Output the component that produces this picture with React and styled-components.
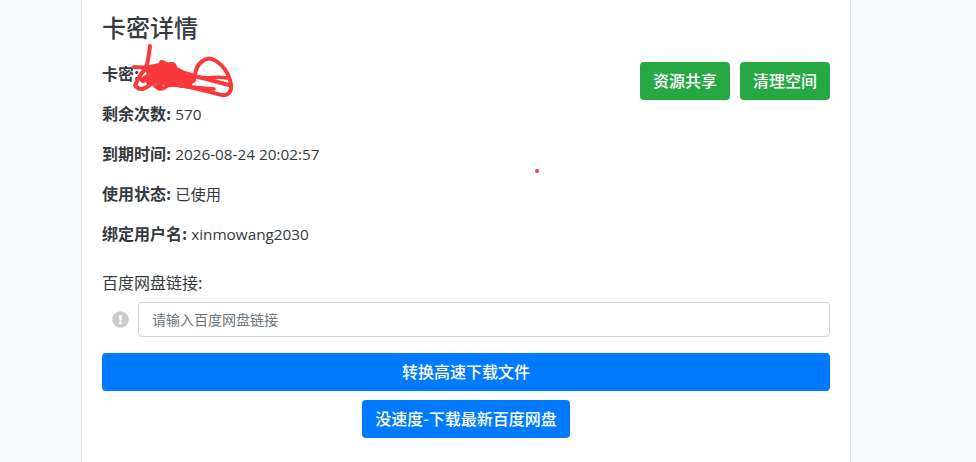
import React from "react";
import styled, { createGlobalStyle } from "styled-components";
import { FaExclamationCircle } from "react-icons/fa";

const Global = createGlobalStyle`
  html, body { margin: 0; padding: 0; height: 462px; overflow: hidden; background: #f8f9fa; }
  body { font-family: "Open Sans", "Noto Sans CJK SC", sans-serif; color: #343a40; font-size: 16px; }
`;
const Page = styled.div`
  position: relative;
  height: 462px;
  overflow: hidden;
  padding-left: 81px;
`;
const Card = styled.main`
  position: relative;
  box-sizing: border-box;
  width: 770px;
  height: 462px;
  background: #fff;
  border-left: 1px solid #dee2e6;
  border-right: 1px solid #dee2e6;
  padding: 8px 20px 0;
`;
const Title = styled.h2`
  margin: 0 0 16px;
  height: 38px;
  font-size: 24px;
  line-height: 38px;
  font-weight: 500;
  font-family: "Noto Sans CJK SC", sans-serif;
  color: #343a40;
`;
const Summary = styled.section`
  display: flex;
  justify-content: space-between;
  align-items: flex-start;
`;
const Details = styled.div`
  display: flex;
  flex-direction: column;
`;
const Row = styled.p`
  margin: 0 0 16px;
  height: 24px;
  line-height: 22px;
  font-size: 15.3px;
  white-space: nowrap;
  strong { font-weight: 700; font-size: 16px; font-family: "Noto Sans CJK SC", sans-serif; }
`;
const Actions = styled.div`
  display: flex;
  gap: 10px;
`;
const Button = styled.button`
  box-sizing: border-box;
  height: 38px;
  padding: 0 ${(p) => (p.$wide ? 0 : "13px")} 2px;
  width: ${(p) => (p.$wide ? "100%" : "auto")};
  border: 0;
  border-radius: 4px;
  background: ${(p) => (p.$tone === "green" ? "#28a745" : "#007bff")};
  color: #fff;
  font: 500 16px "Noto Sans CJK SC", sans-serif;
  white-space: nowrap;
`;
const Label = styled.label`
  display: block;
  margin-top: 9px;
  height: 24px;
  line-height: 22px;
  font-size: 16px;
  font-family: "Noto Sans CJK SC", sans-serif;
`;
const InputRow = styled.div`
  display: flex;
  align-items: center;
  margin-top: 7px;
`;
const IconSlot = styled.span`
  width: 36px;
  display: flex;
  justify-content: center;
  color: #ccc;
  font-size: 17px;
`;
const Input = styled.input`
  flex: 1;
  box-sizing: border-box;
  height: 35px;
  border: 1px solid #ced4da;
  border-radius: 4px;
  padding: 0 13px 2px;
  font: 14px "Noto Sans CJK SC", sans-serif;
  color: #495057;
  &::placeholder { color: #6c757d; opacity: 1; }
`;
const Stack = styled.div`
  display: flex;
  flex-direction: column;
  align-items: center;
  gap: 9px;
  margin-top: 16px;
`;
const Scribble = styled.svg`
  position: absolute;
  left: 120px;
  top: 40px;
  width: 120px;
  height: 65px;
  pointer-events: none;
`;
const Dot = styled.span`
  position: absolute;
  left: 534.5px;
  top: 168.5px;
  width: 4px;
  height: 4px;
  border-radius: 50%;
  background: #f9394d;
`;

export default function App() {
  return (
    <Page>
      <Global />
      <Card>
        <Title>卡密详情</Title>
        <Summary>
          <Details>
            <Row><strong>卡密:</strong></Row>
            <Row><strong>剩余次数:</strong> 570</Row>
            <Row><strong>到期时间:</strong> 2026-08-24 20:02:57</Row>
            <Row><strong>使用状态:</strong> 已使用</Row>
            <Row><strong>绑定用户名:</strong> xinmowang2030</Row>
          </Details>
          <Actions>
            <Button $tone="green">资源共享</Button>
            <Button $tone="green">清理空间</Button>
          </Actions>
        </Summary>
        <Label>百度网盘链接:</Label>
        <InputRow>
          <IconSlot><FaExclamationCircle /></IconSlot>
          <Input placeholder="请输入百度网盘链接" />
        </InputRow>
        <Stack>
          <Button $wide>转换高速下载文件</Button>
          <Button>没速度-下载最新百度网盘</Button>
        </Stack>
      </Card>
      <Scribble viewBox="120 40 120 65" fill="none" stroke="#f9383c" strokeLinecap="round" strokeLinejoin="round">
        <path strokeWidth="4" d="M150 46 C149 54 148 62 146 68 L141 74 L135 85 C139 92 146 89 153 82 C156 89 161 91 167 86" />
        <path strokeWidth="10" d="M150 70 L160 68 L172 67 L168 74 L176 78 L188 82 L168 82 L158 76 L150 80" />
        <path strokeWidth="6" d="M143 80 L156 72 L160 85 M162 63 L180 72 L193 80" />
        <path strokeWidth="4" d="M134 67 L170 69 L195 76 L229 85" />
        <path strokeWidth="4" d="M195 74 C197 63 205 57 212 59 C222 63 229 73 231 84 C232 94 226 97 218 94 C205 91 190 86 170 84" />
        <path strokeWidth="3.5" d="M196 77 C206 79 218 76 227 78 M180 86 L214 89" />
      </Scribble>
      <Dot />
    </Page>
  );
}
